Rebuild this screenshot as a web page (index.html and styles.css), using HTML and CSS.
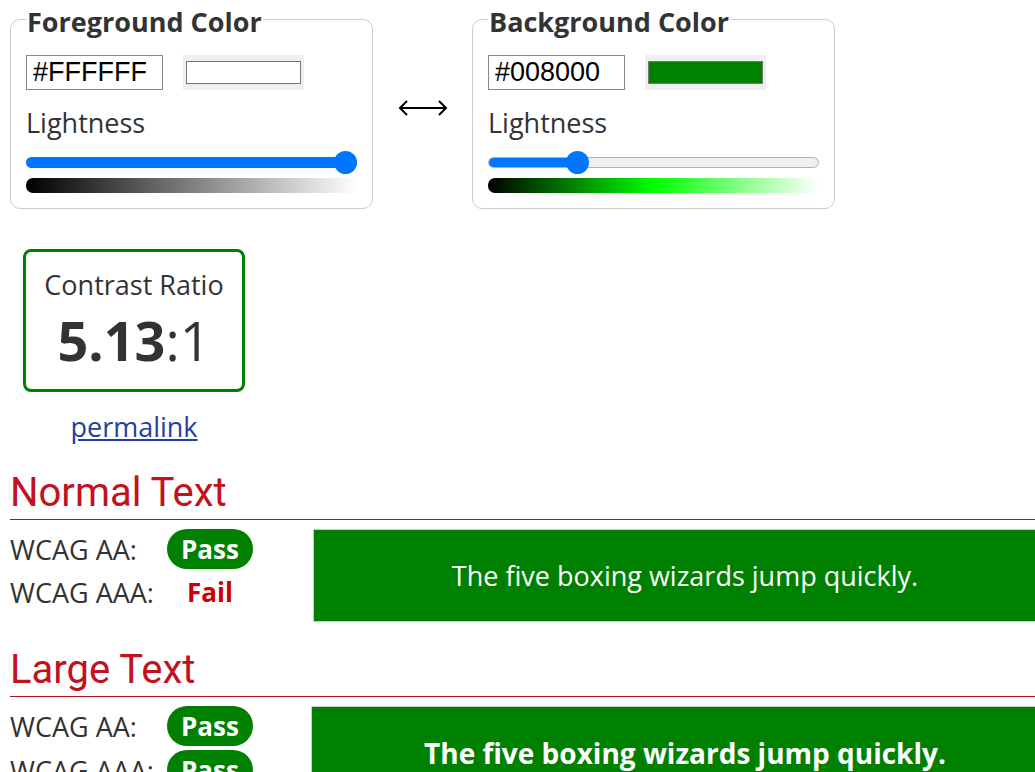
FILE: index.html
```html
<!DOCTYPE html>
<html lang="en">
<head>
<meta charset="utf-8">
<title>Contrast Checker</title>
<link rel="stylesheet" href="styles.css">
</head>
<body>
<div class="pickers">
  <fieldset class="picker">
    <legend>Foreground Color</legend>
    <div class="hexrow">
      <input class="hex" type="text" value="#FFFFFF">
      <div class="swatch"><div class="swatch-inner swatch-white"></div></div>
    </div>
    <div class="label">Lightness</div>
    <div class="slider">
      <div class="track"><div class="fill fill-full"></div></div>
      <div class="thumb thumb-end"></div>
    </div>
    <div class="gradient gradient-gray"></div>
  </fieldset>
  <div class="swap">
    <svg width="50" height="20" viewBox="0 0 50 20" aria-hidden="true">
      <path d="M2 10 H48 M9 3 L2 10 L9 17 M41 3 L48 10 L41 17" fill="none" stroke="#000" stroke-width="2"/>
    </svg>
  </div>
  <fieldset class="picker">
    <legend>Background Color</legend>
    <div class="hexrow">
      <input class="hex" type="text" value="#008000">
      <div class="swatch"><div class="swatch-inner swatch-green"></div></div>
    </div>
    <div class="label">Lightness</div>
    <div class="slider">
      <div class="track track-empty"><div class="fill" style="width: 89px"></div></div>
      <div class="thumb" style="left: 77.5px"></div>
    </div>
    <div class="gradient gradient-green"></div>
  </fieldset>
</div>

<div class="ratio-wrap">
  <div class="ratio-box">
    <div class="ratio-title">Contrast Ratio</div>
    <div class="ratio-value"><b>5.13</b>:1</div>
  </div>
  <div class="permalink"><a href="#">permalink</a></div>
</div>

<section class="result">
  <h2>Normal Text</h2>
  <div class="result-body">
    <div class="checks">
      <div class="check"><span class="check-label">WCAG AA:</span><span class="badge pass">Pass</span></div>
      <div class="check"><span class="check-label">WCAG AAA:</span><span class="badge fail">Fail</span></div>
    </div>
    <div class="sample">The five boxing wizards jump quickly.</div>
  </div>
</section>

<section class="result">
  <h2>Large Text</h2>
  <div class="result-body">
    <div class="checks checks-large">
      <div class="check"><span class="check-label">WCAG AA:</span><span class="badge pass">Pass</span></div>
      <div class="check"><span class="check-label">WCAG AAA:</span><span class="badge pass">Pass</span></div>
    </div>
    <div class="sample sample-large">The five boxing wizards jump quickly.</div>
  </div>
</section>
</body>
</html>
```
FILE: styles.css
```css
html {
  overflow: hidden;
}

body {
  margin: 0;
  padding: 1px 0 0 10px;
  font-family: "Open Sans", sans-serif;
  color: #333;
  background: #fff;
}

.pickers {
  display: flex;
  align-items: flex-start;
}

.picker {
  width: 363px;
  box-sizing: border-box;
  margin: 0;
  border: 1px solid #ccc;
  border-radius: 10px;
  padding: 0 15px 15px;
}

.picker legend {
  font-size: 27px;
  font-weight: 700;
  line-height: 32px;
  padding: 5px 1px 0;
  color: #333;
}

.hexrow {
  display: flex;
  gap: 20px;
  margin-top: 17px;
  height: 35px;
}

.hex {
  width: 137px;
  height: 35px;
  box-sizing: border-box;
  margin: 0;
  border: 1px solid #888;
  padding: 0 6px;
  font-family: "Liberation Sans", Arial, sans-serif;
  font-size: 27px;
  color: #000;
  background: #fff;
  outline: none;
}

.swatch {
  width: 121px;
  height: 35px;
  box-sizing: border-box;
  padding: 6px 3px;
  background: #efefef;
}

.swatch-inner {
  height: 23px;
  box-sizing: border-box;
  border: 1px solid #767676;
}

.swatch-white { background: #fff; }
.swatch-green { background: #008000; }

.label {
  margin-top: 16px;
  font-size: 27px;
  line-height: 34px;
  color: #333;
}

.slider {
  position: relative;
  margin-top: 11px;
  height: 23px;
  display: flex;
  align-items: center;
}

.track {
  width: 100%;
  height: 11px;
  border-radius: 6px;
  overflow: hidden;
  box-sizing: border-box;
}

.track-empty {
  background: #efefef;
  border: 1px solid #b2b2b2;
}

.fill {
  height: 100%;
  background: #0075ff;
}

.fill-full {
  width: 100%;
}

.thumb {
  position: absolute;
  top: 0;
  width: 23px;
  height: 23px;
  border-radius: 50%;
  background: #0075ff;
}

.thumb-end {
  left: calc(100% - 23px);
}

.gradient {
  margin-top: 4px;
  height: 15px;
  border-radius: 7px 0 0 7px;
}

.gradient-gray {
  background: linear-gradient(to right, #000, #fff);
}

.gradient-green {
  background: linear-gradient(to right, #000, #0f0, #fff);
}

.swap {
  width: 50px;
  margin: 97px 24px 0 25px;
  height: 20px;
}

.swap svg {
  display: block;
}

.ratio-wrap {
  width: 222px;
  margin: 40px 0 0 13px;
}

.ratio-box {
  box-sizing: border-box;
  height: 143px;
  border: 3px solid #008000;
  border-radius: 8px;
  padding-top: 16px;
  text-align: center;
}

.ratio-title {
  font-size: 27px;
  line-height: 34px;
}

.ratio-value {
  margin-top: 10px;
  font-size: 54px;
  line-height: 56px;
}

.ratio-value b {
  font-weight: 700;
}

.permalink {
  margin-top: 18px;
  text-align: center;
  font-size: 27px;
  line-height: 34px;
}

.permalink a {
  color: #263f9c;
}

.result {
  margin-top: 25px;
}

.result + .result {
  margin-top: 24px;
}

.result h2 {
  margin: 0;
  font-family: Roboto, sans-serif;
  font-weight: 400;
  font-size: 40px;
  line-height: 48px;
  color: #c1121f;
  padding-bottom: 2px;
  border-bottom: 1px solid #b0131c;
}

.result-body {
  display: flex;
  margin-top: 9px;
}

.checks {
  width: 303px;
  flex: none;
  display: flex;
  flex-direction: column;
  gap: 3px;
}

.checks-large {
  width: 301px;
  gap: 4px;
}

.check {
  display: flex;
  align-items: center;
  height: 40px;
}

.check-label {
  width: 157px;
  font-size: 27px;
}

.badge {
  width: 86px;
  height: 40px;
  line-height: 40px;
  text-align: center;
  font-size: 26px;
  font-weight: 700;
  border-radius: 20px;
}

.badge.pass {
  background: #008000;
  color: #fff;
}

.badge.fail {
  color: #c00;
}

.sample {
  flex: none;
  width: 744px;
  height: 93px;
  box-sizing: border-box;
  border: 1px solid #ccc;
  background: #008000;
  color: #fff;
  display: flex;
  align-items: center;
  justify-content: center;
  font-size: 27px;
}

.sample-large {
  width: 748px;
  font-size: 28px;
  font-weight: 700;
}
```
